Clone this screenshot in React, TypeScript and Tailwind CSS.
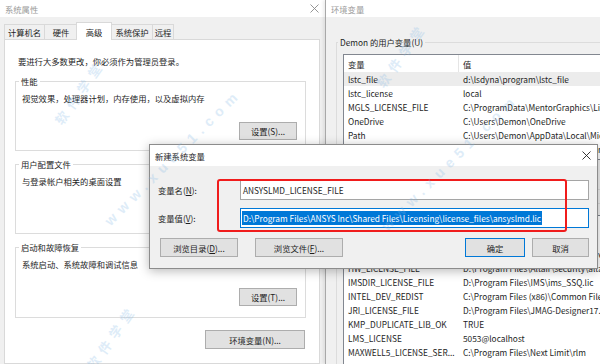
const userVars = [
  ["lstc_file", "d:\\lsdyna\\program\\lstc_file"],
  ["lstc_license", "local"],
  ["MGLS_LICENSE_FILE", "C:\\ProgramData\\MentorGraphics\\Licenses\\license.dat"],
  ["OneDrive", "C:\\Users\\Demon\\OneDrive"],
  ["Path", "C:\\Users\\Demon\\AppData\\Local\\Microsoft\\WindowsApps;"],
  ["TEMP", "C:\\Users\\Demon\\AppData\\Local\\Temp"],
];

const systemVars = [
  ["ComSpec", "C:\\Windows\\system32\\cmd.exe"],
  ["DriverData", "C:\\Windows\\System32\\Drivers\\DriverData"],
  ["HW_LICENSE_FILE", "D:\\Program Files\\Altair\\security\\altair_lic.dat"],
  ["IMSDIR_LICENSE_FILE", "D:\\Program Files\\IMS\\ims_SSQ.lic"],
  ["INTEL_DEV_REDIST", "C:\\Program Files (x86)\\Common Files\\Intel\\Shared Libraries\\"],
  ["JRI_LICENSE_FILE", "D:\\Program Files\\JMAG-Designer17.0\\license.dat"],
  ["KMP_DUPLICATE_LIB_OK", "TRUE"],
  ["LMS_LICENSE", "5053@localhost"],
  ["MAXWELL5_LICENSE_SER...", "C:\\Program Files\\Next Limit\\rlm"],
];

function CloseIcon({ color }: { color: string }) {
  return (
    <svg width="9" height="9" viewBox="0 0 9 9">
      <path d="M0.5 0.5 L8.5 8.5 M8.5 0.5 L0.5 8.5" stroke={color} strokeWidth="0.9" fill="none" />
    </svg>
  );
}

function Button({ children, className }: { children: React.ReactNode; className: string }) {
  return (
    <div className={`flex items-center justify-center bg-[#e1e1e1] border ${className}`}>
      {children}
    </div>
  );
}

function GroupBox({ title, text, button, height }: { title: string; text: string; button?: string; height: string }) {
  return (
    <div className={`ml-[10px] w-[291px] shrink-0 border border-[#dcdcdc] flex flex-col ${height}`}>
      <div className="-mt-[8px] ml-[3px] w-fit bg-white px-[2px] leading-[14px]">{title}</div>
      <div className="mt-[3px] pl-[6px]">{text}</div>
      {button && (
        <div className="mt-[17px] flex justify-end pr-[8px]">
          <Button className="w-[58px] h-[18px] border-[#adadad]">{button}</Button>
        </div>
      )}
    </div>
  );
}

function VarList({ rows, height, highlight }: { rows: string[][]; height: string; highlight?: boolean }) {
  return (
    <div className={`ml-[6px] w-[300px] border border-[#828790] bg-white overflow-hidden ${height}`}>
      <div className="flex h-[17px]">
        <div className="w-[115px] shrink-0 pl-[4px] border-r border-[#e5e5e5] flex items-center">变量</div>
        <div className="pl-[4px] flex items-center">值</div>
      </div>
      {rows.map(([name, value], i) => (
        <div
          key={name}
          className={`flex h-[14px] items-center whitespace-nowrap ${highlight && i === 0 ? "bg-[#ececec]" : ""}`}
        >
          <div className="w-[115px] shrink-0 pl-[4px] overflow-hidden">{name}</div>
          <div className="pl-[4px]">{value}</div>
        </div>
      ))}
    </div>
  );
}

function SystemProperties() {
  const tabs = [
    { label: "计算机名", w: "w-[41px]" },
    { label: "硬件", w: "w-[34px]" },
  ];
  const tabsRight = [
    { label: "系统保护", w: "w-[42px]" },
    { label: "远程", w: "w-[22px]" },
  ];
  return (
    <div className="w-[325px] h-full shrink-0 flex flex-col bg-[#f0f0f0]">
      <div className="h-[17px] shrink-0 bg-white flex items-center justify-between pl-[5px] pr-[6px] text-[#9a9a9a]">
        <span>系统属性</span>
        <CloseIcon color="#8a8a8a" />
      </div>
      <div className="flex items-end h-[22px] shrink-0 pl-[4px]">
        {tabs.map((t) => (
          <div key={t.label} className={`${t.w} h-[15px] -mr-px border border-b-0 border-[#d9d9d9] bg-[#f0f0f0] flex items-center justify-center`}>
            {t.label}
          </div>
        ))}
        <div className="w-[36px] h-[18px] -mb-px -mx-[1px] relative z-10 border border-b-0 border-[#d9d9d9] bg-white flex items-center justify-center">
          高级
        </div>
        {tabsRight.map((t) => (
          <div key={t.label} className={`${t.w} h-[15px] -mr-px border border-b-0 border-[#d9d9d9] bg-[#f0f0f0] flex items-center justify-center`}>
            {t.label}
          </div>
        ))}
      </div>
      <div className="ml-[4px] w-[316px] flex-1 border border-[#d9d9d9] bg-white flex flex-col">
        <div className="mt-[14px] pl-[13px]">要进行大多数更改，你必须作为管理员登录。</div>
        <div className="mt-[13px]">
          <GroupBox title="性能" text="视觉效果，处理器计划，内存使用，以及虚拟内存" button="设置(S)..." height="h-[70px]" />
        </div>
        <div className="mt-[13px]">
          <GroupBox title="用户配置文件" text="与登录帐户相关的桌面设置" button="设置(E)..." height="h-[70px]" />
        </div>
        <div className="mt-[13px]">
          <GroupBox title="启动和故障恢复" text="系统启动、系统故障和调试信息" button="设置(T)..." height="h-[71px]" />
        </div>
        <div className="mt-[12px] ml-[10px] w-[290px] flex justify-end">
          <Button className="w-[100px] h-[19px] border-[#adadad]">环境变量(N)...</Button>
        </div>
      </div>
    </div>
  );
}

function EnvironmentVariables() {
  return (
    <div className="flex-1 h-full overflow-hidden flex flex-col bg-[#f0f0f0] border-l border-[#a8a8a8] shadow-[-2px_0_3px_rgba(0,0,0,0.08)]">
      <div className="h-[17px] shrink-0 bg-white flex items-center pl-[5px] text-[#9a9a9a]">环境变量</div>
      <div className="mt-[25px] ml-[10px] w-[320px] h-[148px] shrink-0 border border-[#dcdcdc] flex flex-col">
        <div className="-mt-[8px] ml-[1px] w-fit bg-[#f0f0f0] px-[2px] leading-[14px]">Demon 的用户变量(U)</div>
        <div className="mt-[5px]">
          <VarList rows={userVars} height="h-[106px]" highlight />
        </div>
      </div>
      <div className="mt-[13px] ml-[10px] w-[320px] h-[200px] shrink-0 border border-[#dcdcdc] flex flex-col">
        <div className="-mt-[8px] ml-[1px] w-fit bg-[#f0f0f0] px-[2px] leading-[14px]">系统变量(S)</div>
        <div className="mt-[5px]">
          <VarList rows={systemVars} height="h-[190px]" />
        </div>
      </div>
    </div>
  );
}

function NewVariableDialog() {
  return (
    <div className="absolute left-[149px] top-[144px] w-[449px] h-[125px] border border-[#8c8c8c] bg-[#f0f0f0] flex flex-col shadow-[0_2px_10px_rgba(0,0,0,0.28)]">
      <div className="h-[21px] shrink-0 bg-white flex items-center justify-between pl-[5px] pr-[6px]">
        <span>新建系统变量</span>
        <CloseIcon color="#222" />
      </div>
      <div className="mt-[14px] flex items-center h-[20px]">
        <div className="w-[90px] pl-[8px]">
          变量名(<u>N</u>):
        </div>
        <div className="w-[349px] h-[20px] border border-[#a5a5a5] bg-white flex items-center pl-[2px] whitespace-nowrap">
          ANSYSLMD_LICENSE_FILE
        </div>
      </div>
      <div className="mt-[8px] flex items-center h-[20px]">
        <div className="w-[90px] pl-[8px]">
          变量值(<u>V</u>):
        </div>
        <div className="w-[349px] h-[20px] border border-[#0078d7] bg-white flex items-center pl-[1px] whitespace-nowrap">
          <span className="bg-[#0078d7] text-white px-[1px] leading-[14px]">
            D:\Program Files\ANSYS Inc\Shared Files\Licensing\license_files\ansyslmd.lic
          </span>
        </div>
      </div>
      <div className="mt-[10px] flex h-[19px] pl-[10px] pr-[8px]">
        <Button className="w-[78px] border-[#adadad]">
          浏览目录(<u>D</u>)...
        </Button>
        <Button className="ml-[17px] w-[88px] border-[#adadad]">
          浏览文件(<u>F</u>)...
        </Button>
        <div className="flex-1" />
        <Button className="w-[60px] border-[#0078d7]">确定</Button>
        <Button className="ml-[7px] w-[57px] border-[#adadad]">取消</Button>
      </div>
      <div className="absolute left-[67px] top-[34px] w-[350px] h-[53px] border-2 border-[#f01c1c] rounded-[3px]" />
    </div>
  );
}

function Watermark() {
  return (
    <div className="absolute inset-0 pointer-events-none overflow-hidden font-['Liberation_Sans',sans-serif] font-bold text-[#7fb6e6] opacity-[0.25]">
      <div className="absolute left-[68px] top-[150px] w-[210px] text-center text-[14px] tracking-[6px] -rotate-45">
        www.xue51.com
      </div>
      <div className="absolute left-[345px] top-[155px] w-[210px] text-center text-[14px] tracking-[6px] -rotate-45">
        www.xue51.com
      </div>
      <div className="absolute left-[40px] top-[85px] w-[80px] text-center text-[13px] tracking-[6px] -rotate-[55deg] font-['Noto_Sans_CJK_SC',sans-serif]">
        软件学堂
      </div>
      <div className="absolute left-[362px] top-[48px] w-[80px] text-center text-[13px] tracking-[6px] -rotate-[55deg] font-['Noto_Sans_CJK_SC',sans-serif]">
        软件学堂
      </div>
      <div className="absolute left-[72px] top-[330px] w-[80px] text-center text-[13px] tracking-[6px] -rotate-[55deg] font-['Noto_Sans_CJK_SC',sans-serif]">
        软件学堂
      </div>
    </div>
  );
}

export default function App() {
  return (
    <div className="relative w-[600px] h-[364px] overflow-hidden bg-[#f0f0f0] font-['Noto_Sans_CJK_SC',sans-serif] text-[8.3px] leading-[14px] text-[#1e1e1e]">
      <div className="flex h-full">
        <SystemProperties />
        <EnvironmentVariables />
      </div>
      <NewVariableDialog />
      <Watermark />
    </div>
  );
}
